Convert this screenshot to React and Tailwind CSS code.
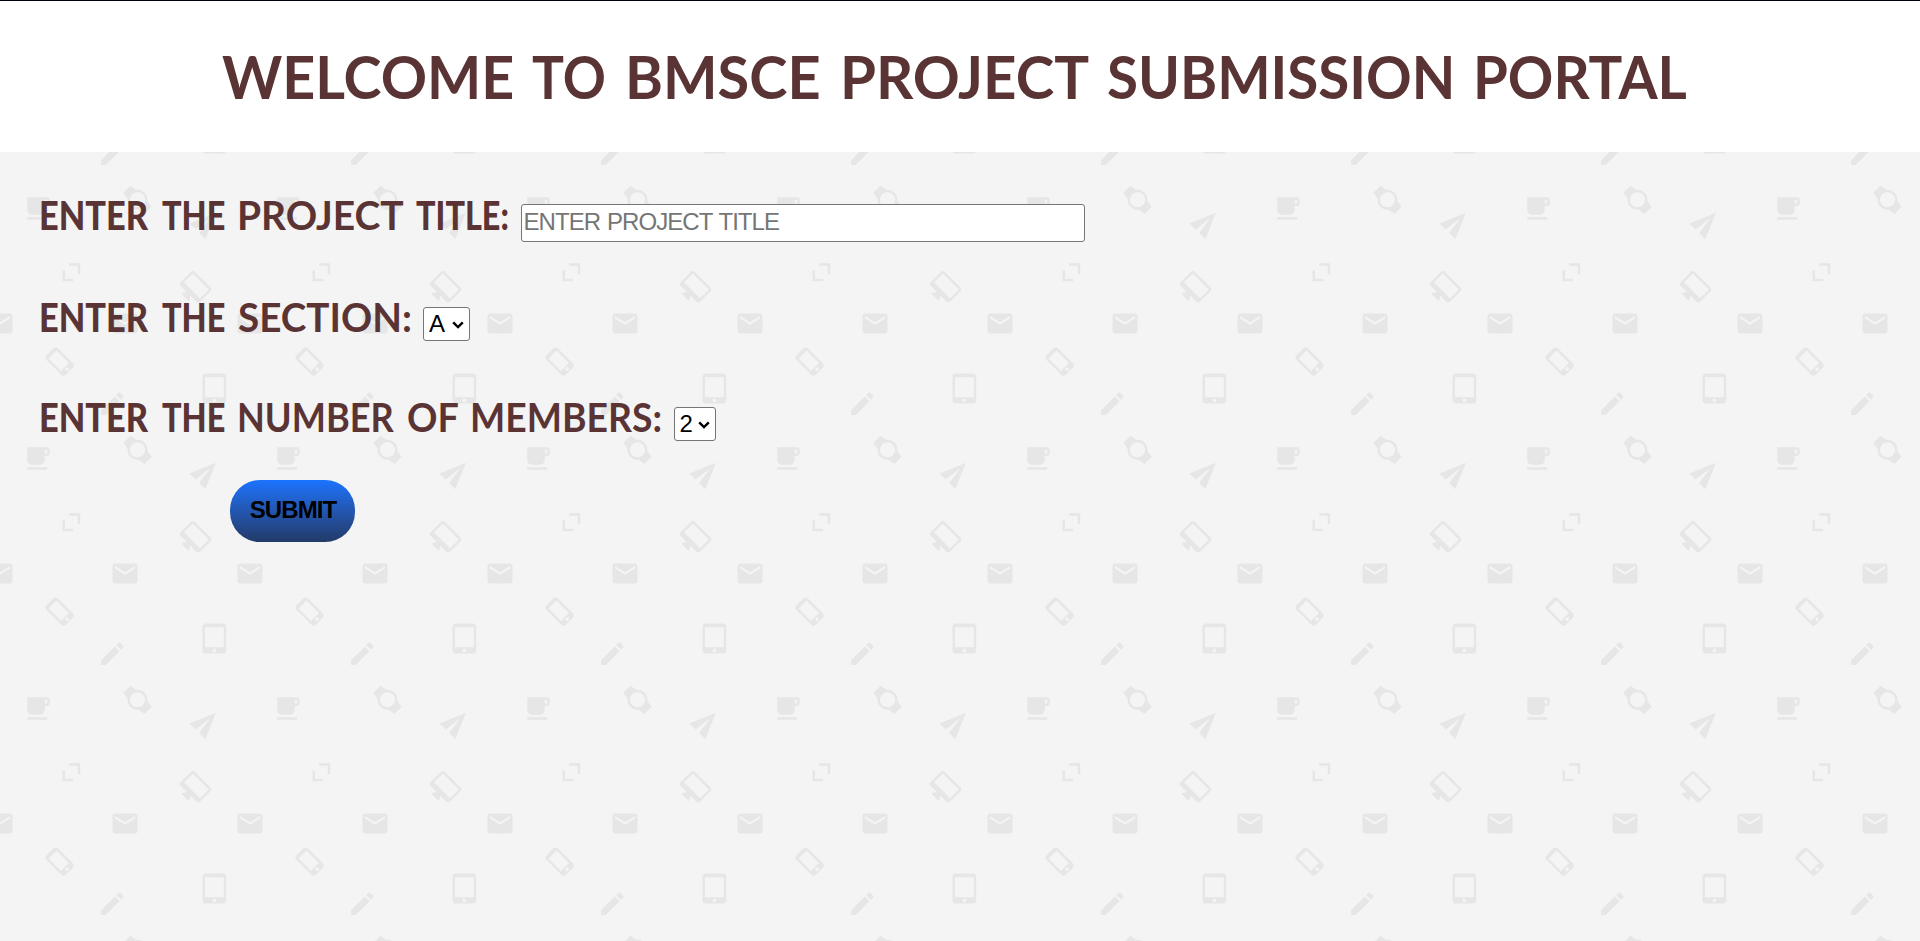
function Word({ children, className, scale }) {
  return (
    <span className={`shrink-0 whitespace-nowrap ${className}`}>
      <span className={`inline-block origin-left ${scale}`}>{children}</span>
    </span>
  );
}

const ENVELOPE =
  "M20 4H4c-1.1 0-1.99.9-1.99 2L2 18c0 1.1.9 2 2 2h16c1.1 0 2-.9 2-2V6c0-1.1-.9-2-2-2zm0 4l-8 5-8-5V6l8 5 8-5v2z";

function Backdrop() {
  return (
    <svg className="absolute inset-0 h-full w-full" aria-hidden="true">
      <defs>
        <pattern id="doodles" x="0" y="-96" width="250" height="250" patternUnits="userSpaceOnUse">
          <g fill="#e6e6e6">
            <path d={ENVELOPE} transform="translate(-15 2.5) scale(1.25)" />
            <path d={ENVELOPE} transform="translate(110 2.5) scale(1.25)" />
            <path d={ENVELOPE} transform="translate(235 2.5) scale(1.25)" />
            <path
              d="M15.500 1h-8C6.120 1 5 2.120 5 3.500v17C5 21.880 6.120 23 7.500 23h8c1.380 0 2.500-1.120 2.500-2.500v-17C18 2.120 16.880 1 15.500 1zm-4 21c-.83 0-1.500-.67-1.500-1.500s.67-1.500 1.500-1.500 1.500.67 1.500 1.500-.67 1.500-1.500 1.500zm4.500-4H7V4h9v14z"
              transform="translate(59.600 55.600) rotate(-45) scale(1.250) translate(-11.500 -12)"
            />
            <path
              d="M3 17.25V21h3.750L17.810 9.940l-3.750-3.750L3 17.250zM20.710 7.040c.39-.39.39-1.020 0-1.410l-2.340-2.340c-.39-.39-1.020-.39-1.410 0l-1.830 1.830 3.750 3.750 1.830-1.830z"
              transform="translate(97.300 82.700) scale(1.250)"
            />
            <path
              d="M18.500 0h-14C3.120 0 2 1.120 2 2.500v19C2 22.880 3.120 24 4.500 24h14c1.380 0 2.500-1.120 2.500-2.500v-19C21 1.120 19.880 0 18.500 0zm-7 23c-.83 0-1.500-.67-1.500-1.500s.67-1.500 1.500-1.500 1.500.67 1.500 1.500-.67 1.500-1.500 1.500zm7.500-4H4V3h15v16z"
              transform="translate(200 67.500) scale(1.250)"
            />
            <path
              d="M20 3H4v10c0 2.210 1.790 4 4 4h6c2.210 0 4-1.790 4-4v-3h2c1.110 0 2-.89 2-2V5c0-1.110-.89-2-2-2zm0 5h-2V5h2v3zM4 19h16v2H4z"
              transform="translate(22.200 137.500) scale(1.250)"
            />
            <path
              d="M20 12c0-2.540-1.190-4.810-3.040-6.270L16 0H8l-.95 5.730C5.190 7.190 4 9.450 4 12s1.190 4.810 3.050 6.270L8 24h8l.96-5.730C18.810 16.810 20 14.540 20 12zM6 12c0-3.310 2.690-6 6-6s6 2.690 6 6-2.690 6-6 6-6-2.690-6-6z"
              transform="translate(137.500 143.800) rotate(-45) scale(1.250) translate(-12 -12)"
            />
            <path
              d="M2.010 21L23 12 2.010 3 2 10l15 2-15 2z"
              transform="translate(206.200 166.500) rotate(-45) scale(1.250) translate(-12 -12)"
            />
            <path d="M69.200 207.200h11v11h-2.500v-8.500h-8.500zM62.500 214.200h2.500v8.500h8.200v2.500H62.500z" />
            <path
              d="M21 2H3c-1.100 0-2 .9-2 2v12c0 1.100.9 2 2 2h7l-2 3v1h8v-1l-2-3h7c1.100 0 2-.9 2-2V4c0-1.100-.9-2-2-2zm0 12H3V4h18v10z"
              transform="translate(193.800 232.500) rotate(45) scale(1.250) translate(-12 -12)"
            />
          </g>
        </pattern>
      </defs>
      <rect width="100%" height="100%" fill="url(#doodles)" />
    </svg>
  );
}

function Select({ options, label, className }) {
  return (
    <div className={`relative mt-2.5 h-[34px] shrink-0 ${className}`}>
      <select
        aria-label={label}
        className="block h-full w-full appearance-none rounded-[3px] border border-[#767676] bg-white pb-px pl-[5px] font-['Liberation_Sans',Arial,sans-serif] text-[24px] leading-[31px] tracking-[-0.8px] text-black"
      >
        {options.map((o) => (
          <option key={o}>{o}</option>
        ))}
      </select>
      <svg
        className="pointer-events-none absolute right-[6px] top-[14px] h-[8px] w-[12px]"
        viewBox="0 0 12 8"
        fill="none"
        stroke="black"
        strokeWidth="2.4"
      >
        <path d="M1.200 1.300L6 6l4.800-4.700" />
      </svg>
    </div>
  );
}

export default function App() {
  return (
    <div className="flex h-[941px] flex-col overflow-hidden bg-[#f4f4f4] font-['Lato',sans-serif] font-bold text-[#5a3434]">
      <header className="h-[152px] shrink-0 border-t border-[#00000a] bg-white pl-[222px]">
        <h1 className="flex text-[60px] leading-[150px]">
          <Word className="w-[310px]" scale="scale-x-[0.956]">WELCOME</Word>
          <Word className="w-[92.5px]" scale="scale-x-[0.89]">TO</Word>
          <Word className="w-[215px]" scale="scale-x-[0.962]">BMSCE</Word>
          <Word className="w-[267px]" scale="scale-x-[0.97]">PROJECT</Word>
          <Word className="w-[366px]" scale="scale-x-[0.942]">SUBMISSION</Word>
          <Word className="w-[215px]" scale="scale-x-[0.939]">PORTAL</Word>
        </h1>
      </header>
      <main className="relative flex-1">
        <Backdrop />
        <form className="relative flex flex-col items-start pl-[38.5px] pt-[42px]" onSubmit={(e) => e.preventDefault()}>
          <div className="flex h-12 items-start text-[40px] leading-10">
            <label htmlFor="title" className="flex pt-px">
              <Word className="w-[123px] font-black" scale="scale-x-[0.858]">ENTER</Word>
              <Word className="w-[75.5px] font-black" scale="scale-x-[0.812]">THE</Word>
              <Word className="w-[178.5px]" scale="scale-x-[0.974]">PROJECT</Word>
              <Word className="w-[105.5px] font-black" scale="scale-x-[0.81]">TITLE:</Word>
            </label>
            <input
              id="title"
              placeholder="ENTER PROJECT TITLE"
              className="mt-2.5 h-[38px] w-[564px] rounded-[3px] border border-[#767676] bg-white pb-[2px] pl-[1.5px] font-['Liberation_Sans',Arial,sans-serif] text-[24px] font-normal tracking-[-0.95px] text-black [word-spacing:1.2px] placeholder:text-[#757575]"
            />
          </div>
          <div className="mt-[55px] flex h-11 items-start text-[40px] leading-10">
            <div className="flex">
              <Word className="w-[123px] font-black" scale="scale-x-[0.858]">ENTER</Word>
              <Word className="w-[76px] font-black" scale="scale-x-[0.812]">THE</Word>
              <Word className="w-[185.5px]" scale="scale-x-[0.966]">SECTION:</Word>
            </div>
            <Select label="Section" options={["A", "B", "C"]} className="w-[47px] font-normal" />
          </div>
          <div className="mt-14 flex h-11 items-start text-[40px] leading-10">
            <div className="flex">
              <Word className="w-[123px] font-black" scale="scale-x-[0.858]">ENTER</Word>
              <Word className="w-[75px] font-black" scale="scale-x-[0.812]">THE</Word>
              <Word className="w-[170.5px]" scale="scale-x-[0.904]">NUMBER</Word>
              <Word className="w-[63px]" scale="scale-x-[0.943]">OF</Word>
              <Word className="w-[203.5px]" scale="scale-x-[0.933]">MEMBERS:</Word>
            </div>
            <Select label="Number of members" options={["2", "3", "4"]} className="w-[42px] font-normal" />
          </div>
          <button className="ml-[191.5px] mt-[38.5px] h-[62.4px] w-[125px] rounded-[30px] bg-linear-to-b from-[#1a73ff] to-[#223a68] pb-[1.5px] pl-px font-['Liberation_Sans',Arial,sans-serif] text-[24px] tracking-[-0.9px] text-black">
            SUBMIT
          </button>
        </form>
      </main>
    </div>
  );
}
